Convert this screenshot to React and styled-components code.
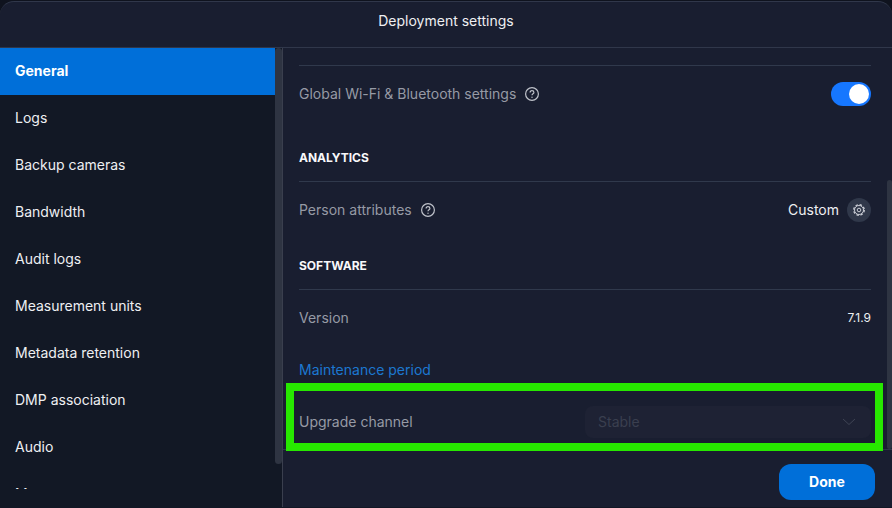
import React, { useState } from "react";
import styled, { createGlobalStyle } from "styled-components";

const menu = [
  "General",
  "Logs",
  "Backup cameras",
  "Bandwidth",
  "Audit logs",
  "Measurement units",
  "Metadata retention",
  "DMP association",
  "Audio",
  "More",
];

export default function App() {
  const [active, setActive] = useState("General");
  const [wifi, setWifi] = useState(true);

  return (
    <>
      <GlobalStyle />
      <Page>
        <Modal>
          <Header>
            <Title>Deployment settings</Title>
          </Header>
          <Body>
            <Sidebar>
              <Menu>
                {menu.map((name) => (
                  <MenuItem
                    key={name}
                    $active={name === active}
                    onClick={() => setActive(name)}
                  >
                    {name}
                  </MenuItem>
                ))}
              </Menu>
              <MenuScroll>
                <Thumb $size="94%" />
              </MenuScroll>
            </Sidebar>
            <Main>
              <Content>
                <Settings>
                  <Section $gap="10px">
                    <Divider />
                    <Row>
                      <Label htmlFor="wifi">
                        Global Wi-Fi &amp; Bluetooth settings
                      </Label>
                      <HelpButton />
                      <Value>
                        <Switch
                          id="wifi"
                          type="checkbox"
                          role="switch"
                          checked={wifi}
                          onChange={(e) => setWifi(e.target.checked)}
                        />
                      </Value>
                    </Row>
                  </Section>
                  <Section>
                    <SectionTitle>ANALYTICS</SectionTitle>
                    <Row>
                      <Label as="span">Person attributes</Label>
                      <HelpButton />
                      <Value>
                        Custom
                        <GearButton aria-label="Person attributes settings">
                          <GearIcon />
                        </GearButton>
                      </Value>
                    </Row>
                  </Section>
                  <Section>
                    <SectionTitle>SOFTWARE</SectionTitle>
                    <Row>
                      <Label as="span">Version</Label>
                      <Version>7.1.9</Version>
                    </Row>
                    <Row>
                      <Link href="#maintenance">Maintenance period</Link>
                    </Row>
                    <Row>
                      <Label htmlFor="channel">Upgrade channel</Label>
                      <SelectBox>
                        <Select id="channel" disabled>
                          <option>Stable</option>
                        </Select>
                        <Chevron viewBox="0 0 14 8">
                          <path d="M1 1l6 5.5L13 1" />
                        </Chevron>
                      </SelectBox>
                      <Highlight />
                    </Row>
                  </Section>
                </Settings>
                <ContentScroll>
                  <Thumb $size="67%" />
                </ContentScroll>
              </Content>
              <Footer>
                <DoneButton>Done</DoneButton>
              </Footer>
            </Main>
          </Body>
        </Modal>
      </Page>
    </>
  );
}

function HelpButton() {
  return (
    <Help aria-label="Help">
      <svg width="14" height="14" viewBox="0 0 14 14" fill="none">
        <circle cx="7" cy="7" r="6.4" stroke="currentColor" strokeWidth="1.2" />
        <path
          d="M5.1 5.6c0-1.1.8-1.9 1.9-1.9s1.9.7 1.9 1.8c0 1.3-1.9 1.4-1.9 2.8"
          stroke="currentColor"
          strokeWidth="1.2"
        />
        <circle cx="7" cy="10.2" r="0.7" fill="currentColor" />
      </svg>
    </Help>
  );
}

function GearIcon() {
  return (
    <svg width="12" height="12" viewBox="0 0 12 12" fill="none">
      <circle
        cx="6"
        cy="6"
        r="5.3"
        stroke="currentColor"
        strokeWidth="1.3"
        strokeDasharray="2.4 1.76"
      />
      <circle cx="6" cy="6" r="4.5" stroke="currentColor" />
      <circle cx="6" cy="6" r="1.8" stroke="currentColor" />
    </svg>
  );
}

const GlobalStyle = createGlobalStyle`
  * {
    box-sizing: border-box;
  }
  body {
    margin: 0;
    background: #0f131e;
    color: #eeeff2;
    font-family: Inter, "Liberation Sans", sans-serif;
    font-size: 14px;
    line-height: 20px;
  }
  button,
  select {
    font: inherit;
    border: none;
    padding: 0;
    cursor: pointer;
  }
`;

const Page = styled.div`
  height: 100vh;
  padding-top: 1px;
`;

const Modal = styled.div`
  height: 100%;
  display: flex;
  flex-direction: column;
  background: #191e30;
  border-top: 1px solid #30374a;
  border-bottom: 1px solid #121725;
  border-radius: 14px 14px 0 0;
  overflow: hidden;
`;

const Header = styled.header`
  display: flex;
  justify-content: center;
  padding: 9px 0 16px;
  border-bottom: 1px solid #30374a;
`;

const Title = styled.h1`
  margin: 0;
  font-size: 14px;
  font-weight: 400;
  line-height: 20px;
`;

const Body = styled.div`
  flex: 1;
  min-height: 0;
  display: flex;
`;

const Sidebar = styled.aside`
  flex: 0 0 283px;
  display: flex;
  padding-bottom: 16px;
  background: #121825;
  border-right: 1px solid #3a3f4e;
`;

const Menu = styled.nav`
  flex: 1;
  margin-bottom: 2px;
  overflow: hidden;
`;

const MenuItem = styled.button`
  display: block;
  width: 100%;
  height: 47px;
  padding: 0 15px 2px;
  text-align: left;
  color: ${(props) => (props.$active ? "#fff" : "#eeeff2")};
  background: ${(props) => (props.$active ? "#006fd9" : "transparent")};
  font-weight: ${(props) => (props.$active ? 700 : 400)};
`;

const MenuScroll = styled.div`
  width: 7px;
  display: flex;
`;

const Thumb = styled.div`
  flex: 1;
  height: ${(props) => props.$size};
  border-radius: 4px;
  background: #2e3442;
`;

const Main = styled.main`
  flex: 1;
  min-width: 0;
  display: flex;
  flex-direction: column;
`;

const Content = styled.div`
  flex: 1;
  min-height: 0;
  display: flex;
`;

const Settings = styled.div`
  flex: 1;
  padding: 17px 16px 0;
`;

const ContentScroll = styled.div`
  width: 5px;
  display: flex;
  align-items: flex-end;
`;

const Section = styled.section`
  padding-bottom: ${(props) => props.$gap || "2px"};
`;

const Divider = styled.hr`
  margin: 0 0 2px;
  border: none;
  border-top: 1px solid #30394c;
`;

const SectionTitle = styled.h2`
  height: 52px;
  margin: 0 0 2px;
  padding-top: 18px;
  border-bottom: 1px solid #30394c;
  color: #f8f8fa;
  font-size: 12px;
  font-weight: 700;
  line-height: 20px;
`;

const Row = styled.div`
  position: relative;
  height: 52px;
  display: flex;
  align-items: center;
`;

const Label = styled.label`
  color: #969aa5;
`;

const Help = styled.button`
  display: flex;
  margin-left: 9px;
  background: none;
  color: #bfc2ca;
`;

const Value = styled.div`
  display: flex;
  align-items: center;
  gap: 8px;
  margin-left: auto;
`;

const Version = styled.span`
  margin-left: auto;
  font-size: 12px;
`;

const Switch = styled.input`
  appearance: none;
  width: 40px;
  height: 24px;
  margin: 0;
  padding: 2px;
  display: flex;
  justify-content: ${(props) => (props.checked ? "flex-end" : "flex-start")};
  border-radius: 12px;
  background: ${(props) => (props.checked ? "#1677ff" : "#343b4c")};
  cursor: pointer;
  &::before {
    content: "";
    width: 20px;
    height: 20px;
    border-radius: 50%;
    background: #fff;
  }
`;

const GearButton = styled.button`
  width: 24px;
  height: 24px;
  display: flex;
  align-items: center;
  justify-content: center;
  border-radius: 50%;
  background: #30384a;
  color: #c9ccd4;
`;

const Link = styled.a`
  color: #1c78d0;
  text-decoration: none;
`;

const SelectBox = styled.div`
  width: 50%;
  margin-left: auto;
  display: grid;
  align-items: center;
`;

const Select = styled.select`
  grid-area: 1 / 1;
  appearance: none;
  width: 100%;
  height: 32px;
  padding: 0 13px;
  border-radius: 8px;
  background: #1e2234;
  color: #3a3f4f;
  opacity: 1;
`;

const Chevron = styled.svg`
  grid-area: 1 / 1;
  justify-self: end;
  width: 14px;
  height: 8px;
  margin-right: 15px;
  fill: none;
  stroke: #3f4454;
  pointer-events: none;
`;

const Highlight = styled.div`
  position: absolute;
  inset: -13px -12px -3px -13px;
  border: 8px solid #27e800;
  pointer-events: none;
`;

const Footer = styled.footer`
  display: flex;
  justify-content: flex-end;
  padding: 14px 17px 7px;
  border-top: 1px solid #30374a;
`;

const DoneButton = styled.button`
  width: 96px;
  height: 36px;
  border-radius: 12px;
  background: #006fd9;
  color: #fff;
  font-weight: 700;
`;
